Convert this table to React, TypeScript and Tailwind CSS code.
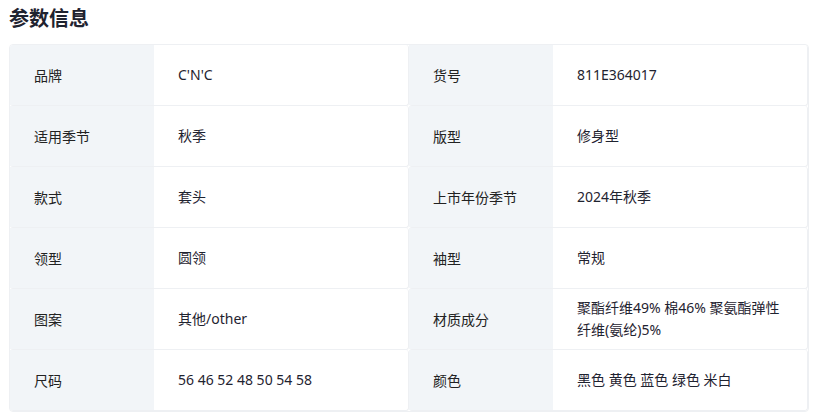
import React from 'react';

type Param = { label: string; value: string };

const params: Param[] = [
  { label: '品牌', value: "C'N'C" },
  { label: '货号', value: '811E364017' },
  { label: '适用季节', value: '秋季' },
  { label: '版型', value: '修身型' },
  { label: '款式', value: '套头' },
  { label: '上市年份季节', value: '2024年秋季' },
  { label: '领型', value: '圆领' },
  { label: '袖型', value: '常规' },
  { label: '图案', value: '其他/other' },
  { label: '材质成分', value: '聚酯纤维49% 棉46% 聚氨酯弹性纤维(氨纶)5%' },
  { label: '尺码', value: '56 46 52 48 50 54 58' },
  { label: '颜色', value: '黑色 黄色 蓝色 绿色 米白' }
];

export default function App() {
  return (
    <div
      className="w-[821px] h-[420px] bg-white pl-[9px] pt-[6px]"
      style={{ fontFamily: '"Noto Sans", "Noto Sans CJK SC", sans-serif' }}
    >
      <h2 className="text-[20px] leading-[26px] font-bold text-[#1f2330]">参数信息</h2>
      <div className="mt-[12px] w-[800px] grid grid-cols-2 rounded-[4px] overflow-hidden border border-[#eef0f3]">
        {params.map((p) => (
          <div key={p.label} className="flex h-[61px] border-b border-r border-[#eef0f3] rounded-[3px] bg-white">
            <div className="w-[144px] shrink-0 bg-[#f2f5f8] flex items-center pl-[24px] text-[14px] text-[#222]">
              {p.label}
            </div>
            <div className="flex-1 flex items-center pl-[24px] pr-[16px] text-[14px] leading-[22px] text-[#1f2330]">
              {p.value}
            </div>
          </div>
        ))}
      </div>
    </div>
  );
}
